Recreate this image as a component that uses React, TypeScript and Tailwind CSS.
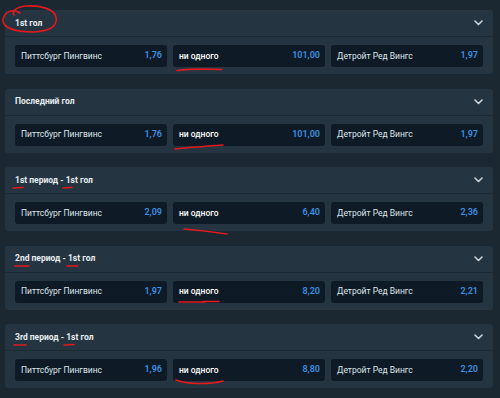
import React from "react";

type Market = {
  title: React.ReactNode;
  odds: [string, string, string];
};

const markets: Market[] = [
  { title: "1st гол", odds: ["1,76", "101,00", "1,97"] },
  { title: "Последний гол", odds: ["1,76", "101,00", "1,97"] },
  { title: "1st период - 1st гол", odds: ["2,09", "6,40", "2,36"] },
  { title: "2nd период - 1st гол", odds: ["1,97", "8,20", "2,21"] },
  { title: "3rd период - 1st гол", odds: ["1,96", "8,80", "2,20"] },
];

const outcomes = ["Питтсбург Пингвинс", "ни одного", "Детройт Ред Вингс"];

const Chevron = () => (
  <svg width="9" height="6" viewBox="0 0 9 6" fill="none">
    <polyline
      points="1,1 4.5,4.5 8,1"
      stroke="#c9d2d9"
      strokeWidth="1.6"
      strokeLinecap="round"
      strokeLinejoin="round"
    />
  </svg>
);

const MarketCard: React.FC<{ market: Market }> = ({ market }) => (
  <div className="w-[488px] h-[64px] rounded-[3px] bg-[#243541] flex flex-col">
    <div className="h-[27px] px-[10px] flex items-center justify-between border-b border-[#1c2a34]">
      <span className="text-[8.5px] font-bold text-[#e8edf1]">{market.title}</span>
      <Chevron />
    </div>
    <div className="flex gap-[6px] px-[10px] pt-[8px]">
      {outcomes.map((name, i) => (
        <div
          key={name}
          className="w-[152px] h-[22px] rounded-[3px] bg-[#0e1b26] flex items-center justify-between pl-[6px] pr-[5px]"
        >
          <span className={`text-[8.5px] text-[#dfe5ea] ${i === 1 ? "font-medium text-white" : ""}`}>
            {name}
          </span>
          <span className="text-[9px] font-semibold text-[#3d8fe0]">{market.odds[i]}</span>
        </div>
      ))}
    </div>
  </div>
);

const Marks = () => (
  <svg
    className="absolute left-0 top-0 pointer-events-none"
    width="500"
    height="398"
    viewBox="0 0 500 398"
    fill="none"
    stroke="#e3191c"
    strokeWidth="1.6"
    strokeLinecap="round"
  >
    <path d="M20 13 C 12 8, 4 12, 3 20 C 3 29, 18 32, 34 32 C 50 31, 58 26, 56 17 C 54 9, 40 5, 26 6 C 17 7, 11 11, 14 15" />
    <path d="M177 70.5 C 190 69, 208 69, 222 69.5" />
    <path d="M175 149 C 190 147.5, 210 146, 223 145" />
    <path d="M13 188 L23 187.5" />
    <path d="M63 188 L72 187.5" />
    <path d="M184 229 C 196 230, 214 232, 227 234" />
    <path d="M15 266 L29 266" />
    <path d="M67 266 L78 266" />
    <path d="M179 302 L205 302" />
    <path d="M203 301.5 L219 301.5" />
    <path d="M14 345 L26 345" />
    <path d="M64 345 L74 344.5" />
    <path d="M176 380 C 186 384, 208 385, 223 381" />
  </svg>
);

export default function App() {
  return (
    <div
      className="relative w-[500px] h-[398px] bg-[#1b2832] overflow-hidden"
      style={{ fontFamily: "Roboto, 'Noto Sans', sans-serif" }}
    >
      <div className="flex flex-col gap-[14.5px] pt-[10px] pl-[5px]">
        {markets.map((m, i) => (
          <MarketCard key={i} market={m} />
        ))}
      </div>
      <Marks />
    </div>
  );
}
